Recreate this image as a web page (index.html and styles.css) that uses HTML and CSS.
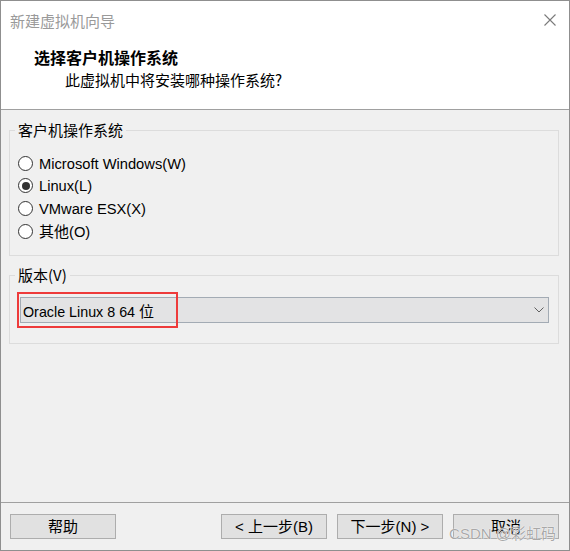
FILE: index.html
```html
<!DOCTYPE html>
<html lang="zh-CN">
<head>
<meta charset="utf-8">
<title>新建虚拟机向导</title>
<link rel="stylesheet" href="styles.css">
</head>
<body>
<div class="window">
  <div class="header">
    <div class="titlebar">
      <span class="title">新建虚拟机向导</span>
      <svg class="close" width="12" height="12" viewBox="0 0 12 12" aria-hidden="true">
        <path d="M0.5 0.5 L11.5 11.5 M11.5 0.5 L0.5 11.5" stroke="#7a7a7a" stroke-width="1.1" fill="none"/>
      </svg>
    </div>
    <div class="heading">选择客户机操作系统</div>
    <div class="subheading">此虚拟机中将安装哪种操作系统?</div>
  </div>

  <div class="content">
    <fieldset class="group group-os">
      <legend>客户机操作系统</legend>
      <div class="radio-list">
        <div class="radio"><span class="radio-mark"></span><span class="radio-text">Microsoft Windows(W)</span></div>
        <div class="radio checked"><span class="radio-mark"></span><span class="radio-text">Linux(L)</span></div>
        <div class="radio"><span class="radio-mark"></span><span class="radio-text">VMware ESX(X)</span></div>
        <div class="radio"><span class="radio-mark"></span><span class="radio-text"><span class="cjk">其他</span>(O)</span></div>
      </div>
    </fieldset>

    <fieldset class="group group-version">
      <legend>版本(V)</legend>
      <div class="select-wrap">
        <div class="select">
          <span class="select-text">Oracle Linux 8 64 <span class="cjk">位</span></span>
          <svg class="chevron" width="10" height="6" viewBox="0 0 10 6" aria-hidden="true">
            <path d="M0.5 0.5 L5 5 L9.5 0.5" stroke="#606060" stroke-width="1" fill="none"/>
          </svg>
        </div>
        <div class="highlight"></div>
      </div>
    </fieldset>
  </div>

  <div class="footer">
    <button class="btn">帮助</button>
    <div class="nav">
      <button class="btn">&lt; 上一步(B)</button>
      <button class="btn">下一步(N) &gt;</button>
      <button class="btn">取消</button>
    </div>
  </div>

  <div class="watermark">CSDN @彩虹码</div>
</div>
</body>
</html>
```

FILE: styles.css
```css
* {
  box-sizing: border-box;
}

html, body {
  margin: 0;
  padding: 0;
}

body {
  width: 570px;
  height: 551px;
  background: #f0f0f0;
  font-family: "Liberation Sans", "Noto Sans CJK SC", sans-serif;
  font-size: 14px;
  color: #000;
}

.cjk {
  font-family: "Noto Sans CJK SC", sans-serif;
  font-size: 15px;
}

.window {
  position: relative;
  width: 570px;
  height: 551px;
  border: 1px solid #8f8f8f;
  background: #f0f0f0;
  display: flex;
  flex-direction: column;
}

/* ---------- header ---------- */
.header {
  height: 109px;
  background: #fff;
  border-bottom: 1px solid #a0a0a0;
  font-family: "Noto Sans CJK SC", sans-serif;
}

.titlebar {
  height: 38px;
  display: flex;
  align-items: center;
  justify-content: space-between;
  padding: 0 13px 0 9px;
}

.title {
  font-size: 15px;
  line-height: 20px;
  color: #9a9a9a;
  margin-top: 1px;
}

.close {
  display: block;
}

.heading {
  margin-top: 8px;
  padding-left: 33px;
  font-size: 16px;
  font-weight: bold;
  line-height: 20px;
}

.subheading {
  margin-top: 3px;
  padding-left: 64px;
  font-size: 15px;
  line-height: 20px;
}

/* ---------- content ---------- */
.content {
  flex: 1;
  padding: 10px 10px 0 8px;
  display: flex;
  flex-direction: column;
  gap: 9px;
}

.group {
  margin: 0;
  padding: 0;
  border: 1px solid #dcdcdc;
  min-width: 0;
}

.group legend {
  margin-left: 5px;
  padding: 0 3px;
  font-family: "Noto Sans CJK SC", sans-serif;
  font-size: 15px;
  line-height: 20px;
}

.group-os {
  height: 136px;
}

.group-version {
  height: 79px;
}

.radio-list {
  padding: 12px 0 0 8px;
  display: flex;
  flex-direction: column;
}

.radio {
  height: 22.67px;
  display: flex;
  align-items: center;
  gap: 6px;
}

.radio-mark {
  width: 15px;
  height: 15px;
  border: 1px solid #333;
  border-radius: 50%;
  background: #fff;
  display: flex;
  align-items: center;
  justify-content: center;
  flex: none;
}

.radio.checked .radio-mark::after {
  content: "";
  width: 8px;
  height: 8px;
  border-radius: 50%;
  background: #333;
}

.radio-text {
  font-size: 14.7px;
  line-height: 20px;
  margin-top: 1px;
}

.select-wrap {
  position: relative;
  margin: 12px 9px 0 10px;
}

.select {
  height: 26px;
  background: #e3e3e4;
  border: 1px solid #a3abb4;
  display: flex;
  align-items: center;
  justify-content: space-between;
  padding: 0 4px 0 2px;
}

.select-text {
  font-size: 14.3px;
  line-height: 20px;
  margin-top: 2px;
}

.chevron {
  display: block;
}

.highlight {
  position: absolute;
  left: -3px;
  top: -5px;
  width: 161px;
  height: 36px;
  border: 2px solid #ee3b3b;
}

/* ---------- footer ---------- */
.footer {
  height: 48px;
  border-top: 1px solid #a0a0a0;
  display: flex;
  justify-content: space-between;
  align-items: flex-start;
  padding: 11px 10px 0 9px;
}

.nav {
  display: flex;
  gap: 10px;
}

.btn {
  width: 106px;
  height: 25px;
  padding: 0;
  margin: 0;
  background: #e1e1e1;
  border: 1px solid #adadad;
  border-radius: 0;
  font-family: "Liberation Sans", "Noto Sans CJK SC", sans-serif;
  font-size: 15px;
  line-height: 20px;
  color: #000;
}

/* ---------- watermark ---------- */
.watermark {
  position: absolute;
  right: 13px;
  bottom: 6px;
  font-family: "Liberation Sans", "Noto Sans CJK SC", sans-serif;
  font-size: 15px;
  line-height: 20px;
  color: rgba(140, 140, 140, 0.75);
  text-shadow: 0 0 1px #fff, 0 0 1px #fff;
  pointer-events: none;
}
```
